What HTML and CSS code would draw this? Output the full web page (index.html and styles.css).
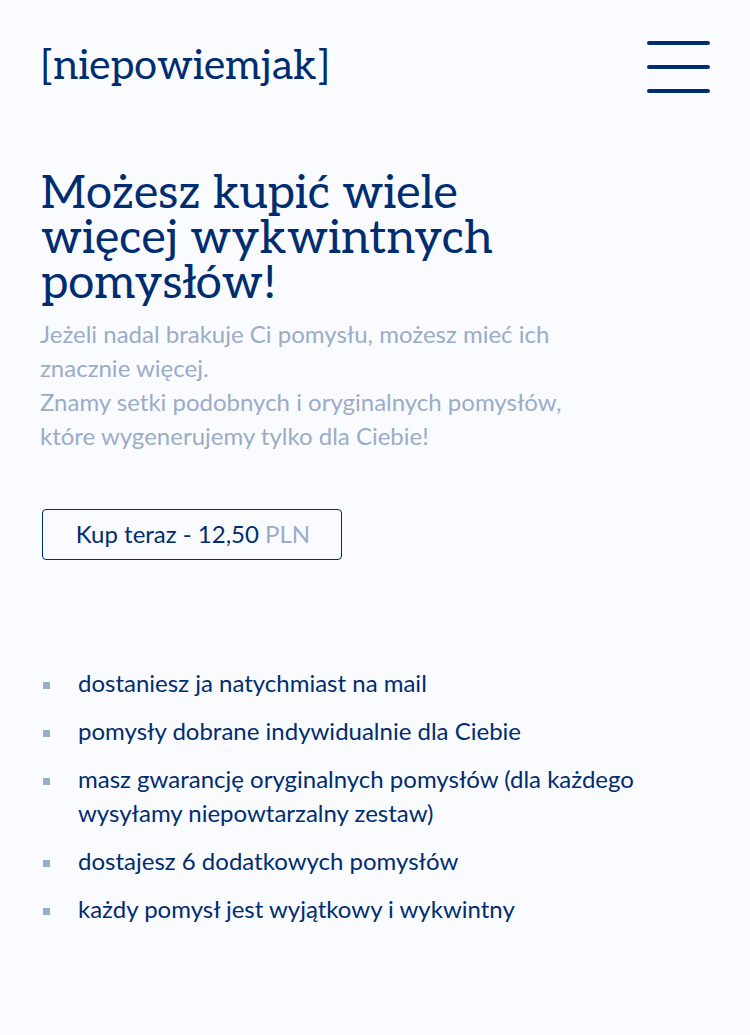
FILE: index.html
```html
<!DOCTYPE html>
<html lang="pl">
<head>
<meta charset="utf-8">
<meta name="viewport" content="width=device-width, initial-scale=1">
<title>[niepowiemjak]</title>
<link rel="stylesheet" href="styles.css">
</head>
<body>
<header class="site-header">
  <a class="logo" href="#">[niepowiemjak]</a>
  <button class="menu-button" type="button" aria-label="Menu">
    <span class="menu-line"></span>
    <span class="menu-line"></span>
    <span class="menu-line"></span>
  </button>
</header>
<main class="offer">
  <h1 class="offer-title">Możesz kupić wiele<br>więcej wykwintnych<br>pomysłów!</h1>
  <p class="offer-text">Jeżeli nadal brakuje Ci pomysłu, możesz mieć ich<br>znacznie więcej.<br>Znamy setki podobnych i oryginalnych pomysłów,<br>które wygenerujemy tylko dla Ciebie!</p>
  <button class="buy-button" type="button">Kup teraz - 12,50 <span class="currency">PLN</span></button>
  <ul class="benefits">
    <li class="benefit">dostaniesz ja natychmiast na mail</li>
    <li class="benefit">pomysły dobrane indywidualnie dla Ciebie</li>
    <li class="benefit">masz gwarancję oryginalnych pomysłów (dla każdego wysyłamy niepowtarzalny zestaw)</li>
    <li class="benefit">dostajesz 6 dodatkowych pomysłów</li>
    <li class="benefit">każdy pomysł jest wyjątkowy i wykwintny</li>
  </ul>
</main>
</body>
</html>
```
FILE: styles.css
```css
* {
  box-sizing: border-box;
}

body {
  margin: 0;
  padding: 40px;
  background: #fafbff;
  color: #002d70;
  font-family: Lato, "Open Sans", sans-serif;
  font-size: 24px;
  line-height: 34px;
}

.site-header {
  display: flex;
  justify-content: space-between;
  align-items: center;
}

.logo {
  color: inherit;
  font-family: Aleo, "Liberation Serif", serif;
  font-size: 41px;
  line-height: 54px;
  text-decoration: none;
}

.menu-button {
  display: flex;
  flex-direction: column;
  gap: 20px;
  width: 63px;
  padding: 0;
  border: 0;
  background: none;
}

.menu-line {
  width: 100%;
  height: 4px;
  border-radius: 2px;
  background: #002d70;
}

.offer {
  padding-top: 77px;
}

.offer-title {
  margin: 0;
  padding-left: 1px;
  font-family: Aleo, "Liberation Serif", serif;
  font-size: 47px;
  font-weight: 400;
  line-height: 45px;
}

.offer-text {
  margin: 11px 0 56px;
  color: #9aacc8;
}

.buy-button {
  display: block;
  width: 300px;
  height: 51px;
  margin-left: 2px;
  padding: 0 0 2px 2px;
  border: 1px solid #002d70;
  border-radius: 4px;
  background: none;
  color: inherit;
  font: inherit;
}

.currency {
  color: #9aacc8;
}

.benefits {
  display: flex;
  flex-direction: column;
  gap: 14px;
  margin: 106px 0 0;
  padding: 0;
  list-style: none;
}

.benefit {
  position: relative;
  padding: 0 36px 0 38px;
}

.benefit::before {
  content: "";
  position: absolute;
  top: 16px;
  left: 3px;
  width: 7px;
  height: 7px;
  background: #9aacc8;
}
```
